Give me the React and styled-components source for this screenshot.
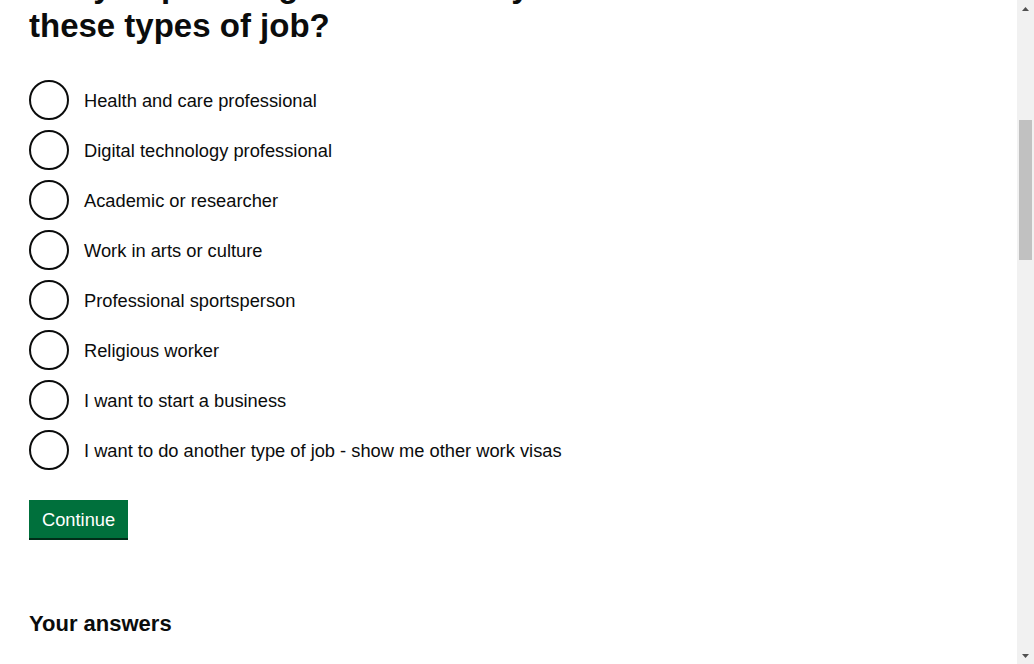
import React, { useLayoutEffect, useRef } from 'react';
import styled, { createGlobalStyle } from 'styled-components';

const GlobalStyle = createGlobalStyle`
  html, body {
    margin: 0;
    padding: 0;
    background: #ffffff;
    overflow: hidden;
  }
  body {
    font-family: "Liberation Sans", Arial, sans-serif;
    color: #0b0c0c;
  }
`;

const Screen = styled.div`
  display: flex;
  height: 100vh;
  overflow: hidden;
`;

const Viewport = styled.div`
  flex: 1;
  overflow: hidden;
`;

const Page = styled.div`
  display: flex;
  flex-direction: column;
  min-height: 2988px;
`;

const Header = styled.header`
  background: #0b0c0c;
  border-bottom: 10px solid #1d70b8;
  height: 60px;
  display: flex;
  align-items: center;
  gap: 30px;
  padding: 0 29px;
  color: #ffffff;
`;

const Logo = styled.span`
  font-size: 28px;
  font-weight: bold;
  letter-spacing: 0.5px;
`;

const ServiceName = styled.span`
  font-size: 22px;
  font-weight: bold;
`;

const Container = styled.div`
  padding: 0 29px;
  max-width: 960px;
`;

const PhaseBanner = styled.div`
  padding: 10px 0;
  border-bottom: 1px solid #b1b4b6;
  font-size: 16px;
  line-height: 20px;
  display: flex;
  gap: 10px;
  align-items: center;
`;

const Tag = styled.strong`
  background: #1d70b8;
  color: #ffffff;
  padding: 2px 8px;
  font-size: 14px;
  letter-spacing: 1px;
  text-transform: uppercase;
`;

const Link = styled.a`
  color: #1d70b8;
  text-decoration: underline;
  font-size: ${p => p.size || 18}px;
`;

const BackLink = styled(Link)`
  display: inline-block;
  margin: 15px 0;
  color: #0b0c0c;
  font-size: 16px;
  line-height: 20px;
`;

const Main = styled.main`
  flex: 1;
  padding: 40px 0 60px;
`;

const Column = styled.div`
  max-width: 600px;
`;

const Caption = styled.span`
  display: block;
  color: #505a5f;
  font-size: 24px;
  line-height: 30px;
  margin-bottom: 5px;
`;

const Body = styled.p`
  font-size: 18px;
  line-height: 25px;
  margin: 0 0 20px;
`;

const Fieldset = styled.fieldset`
  border: 0;
  padding: 0;
  margin: 0 0 30px;
  min-width: 0;
`;

const Heading = styled.h1`
  font-size: 33px;
  line-height: 40px;
  font-weight: bold;
  margin: 0 0 34px;
  padding: 0;
  max-width: 600px;
`;

const Radios = styled.div`
  display: flex;
  flex-direction: column;
  gap: 10px;
`;

const RadioItem = styled.label`
  display: flex;
  align-items: center;
  gap: 15px;
  min-height: 40px;
  font-size: 18.3px;
  line-height: 25px;
  cursor: pointer;
`;

const RadioCircle = styled.span`
  box-sizing: border-box;
  flex-shrink: 0;
  width: 40px;
  height: 40px;
  border: 2px solid #0b0c0c;
  border-radius: 50%;
  background: #ffffff;
`;

const RadioText = styled.span`
  padding-top: 1px;
`;

const Button = styled.button`
  display: inline-block;
  box-sizing: border-box;
  height: 38px;
  padding: 7px 11px 5px;
  border: 2px solid transparent;
  border-radius: 0;
  background: #00703c;
  box-shadow: 0 2px 0 #002d18;
  color: #ffffff;
  font-family: "Liberation Sans", Arial, sans-serif;
  font-size: 18.3px;
  line-height: 22px;
  cursor: pointer;
  margin-bottom: 71px;
`;

const SubHeading = styled.h2`
  font-size: 22px;
  line-height: 30px;
  font-weight: bold;
  margin: 0 0 20px;
`;

const SummaryList = styled.dl`
  margin: 0 0 30px;
  font-size: 18px;
  line-height: 25px;
`;

const SummaryRow = styled.div`
  display: grid;
  grid-template-columns: 30% 50% 20%;
  border-bottom: 1px solid #b1b4b6;
  padding: 10px 0;
`;

const SummaryKey = styled.dt`
  font-weight: bold;
  padding-right: 20px;
`;

const SummaryValue = styled.dd`
  margin: 0;
  padding-right: 20px;
`;

const SummaryAction = styled.dd`
  margin: 0;
  text-align: right;
`;

const Footer = styled.footer`
  background: #f3f2f1;
  border-top: 1px solid #b1b4b6;
  padding: 25px 0 15px;
  font-size: 16px;
  line-height: 20px;
`;

const FooterLinks = styled.div`
  display: flex;
  flex-wrap: wrap;
  gap: 8px 15px;
  margin-bottom: 25px;
`;

const FooterLink = styled.a`
  color: #0b0c0c;
  text-decoration: underline;
`;

const FooterMeta = styled.div`
  display: flex;
  justify-content: space-between;
  align-items: flex-end;
  gap: 20px;
`;

/* classic browser scrollbar, drawn as part of the page */
const Scrollbar = styled.div`
  width: 17px;
  flex-shrink: 0;
  background: #f1f1f1;
  display: flex;
  flex-direction: column;
`;

const ScrollArrow = styled.div`
  height: 17px;
  display: flex;
  align-items: center;
  justify-content: center;
`;

const ScrollTrack = styled.div`
  flex: 1;
  padding: 103px 2px 0;
`;

const ScrollThumb = styled.div`
  height: 140px;
  background: #c1c1c1;
`;

const Arrow = ({ down }) => (
  <svg width="7" height="4" viewBox="0 0 7 4">
    <path d={down ? 'M0 0 L7 0 L3.5 4 Z' : 'M3.5 0 L7 4 L0 4 Z'} fill="#505050" />
  </svg>
);

const jobs = [
  'Health and care professional',
  'Digital technology professional',
  'Academic or researcher',
  'Work in arts or culture',
  'Professional sportsperson',
  'Religious worker',
  'I want to start a business',
  'I want to do another type of job - show me other work visas',
];

const answers = [
  ['What’s your nationality?', 'Indian'],
  ['Why do you want to come to the UK?', 'Work'],
  ['How long are you planning to work in the UK for?', 'Longer than 6 months'],
];

const App = () => {
  const viewRef = useRef(null);
  const headingRef = useRef(null);

  useLayoutEffect(() => {
    // page is shown scrolled so only the second line of the question is in view
    const view = viewRef.current;
    const offset = headingRef.current.getBoundingClientRect().top - view.getBoundingClientRect().top;
    view.scrollTop = offset + 34;
  }, []);

  return (
    <Screen>
      <GlobalStyle />
      <Viewport ref={viewRef}>
        <Page>
          <Header>
            <Logo>GOV.UK</Logo>
            <ServiceName>Check if you need a UK visa</ServiceName>
          </Header>
          <Container>
            <PhaseBanner>
              <Tag>Beta</Tag>
              <span>This is a new service – your <Link size={16}>feedback</Link> will help us to improve it.</span>
            </PhaseBanner>
            <BackLink>Back</BackLink>
          </Container>
          <Main>
            <Container>
              <Column>
                <Caption>Work visas</Caption>
                <Body>You may be able to get a visa to work in the UK.</Body>
                <Body>There are different visas depending on the kind of work you’ll be doing and how long you want to stay.</Body>
                <Body>Tell us what kind of work you’ll be doing so we can show you the right visa.</Body>
                <form onSubmit={e => e.preventDefault()}>
                  <Fieldset>
                    <Heading as="legend" ref={headingRef}>
                      Are you planning to work in any of these types of job?
                    </Heading>
                    <Radios>
                      {jobs.map(job => (
                        <RadioItem key={job}>
                          <RadioCircle />
                          <RadioText>{job}</RadioText>
                        </RadioItem>
                      ))}
                    </Radios>
                  </Fieldset>
                  <Button type="submit">Continue</Button>
                </form>
              </Column>
              <SubHeading>Your answers</SubHeading>
              <SummaryList>
                {answers.map(([q, a]) => (
                  <SummaryRow key={q}>
                    <SummaryKey>{q}</SummaryKey>
                    <SummaryValue>{a}</SummaryValue>
                    <SummaryAction><Link>Change</Link></SummaryAction>
                  </SummaryRow>
                ))}
              </SummaryList>
              <Link>Start again</Link>
            </Container>
          </Main>
          <Footer>
            <Container>
              <FooterLinks>
                <FooterLink>Help</FooterLink>
                <FooterLink>Cookies</FooterLink>
                <FooterLink>Contact</FooterLink>
                <FooterLink>Accessibility statement</FooterLink>
                <FooterLink>Privacy notice</FooterLink>
              </FooterLinks>
              <FooterMeta>
                <span>All content is available under the <FooterLink>Open Government Licence v3.0</FooterLink>, except where otherwise stated</span>
                <FooterLink>© Crown copyright</FooterLink>
              </FooterMeta>
            </Container>
          </Footer>
        </Page>
      </Viewport>
      <Scrollbar>
        <ScrollArrow><Arrow /></ScrollArrow>
        <ScrollTrack>
          <ScrollThumb />
        </ScrollTrack>
        <ScrollArrow><Arrow down /></ScrollArrow>
      </Scrollbar>
    </Screen>
  );
};

export default App;
